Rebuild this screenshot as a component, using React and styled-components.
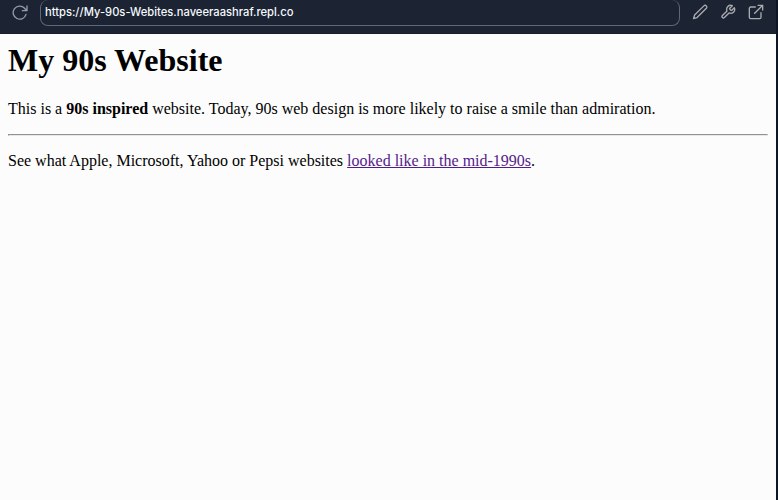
import React from 'react';
import styled, { createGlobalStyle } from 'styled-components';

const GlobalStyle = createGlobalStyle`
  * { box-sizing: border-box; }
  body { margin: 0; background: #fcfcfc; }
`;

const Window = styled.div`
  display: flex;
  flex-direction: column;
  width: 778px;
  height: 500px;
  overflow: hidden;
  background: #fcfcfc;
  border-right: 2px solid #0e1525;
`;

const Toolbar = styled.header`
  display: flex;
  align-items: flex-start;
  flex: none;
  height: 34px;
  padding-left: 12px;
  background: #1c2333;
  border-bottom: 1px solid #171d2d;
`;

const IconButton = styled.button`
  display: flex;
  flex: none;
  margin: 4px 12px 0 0;
  padding: 0;
  border: 0;
  background: none;
  color: ${(p) => p.$color || '#a9abaf'};
`;

const AddressBar = styled.div`
  flex: none;
  width: 640px;
  height: 26px;
  margin-right: 12px;
  padding: 3px 4px 0;
  border: 1px solid #5f677a;
  border-top: 0;
  border-radius: 8px;
  color: #f5f9fc;
  font: 500 11.2px/18px Inter, sans-serif;
  white-space: nowrap;
`;

const Page = styled.main`
  flex: 1;
  padding: 9px 8px;
  color: #000;
  font: 16px/18px "Liberation Serif", "Times New Roman", serif;
`;

const Title = styled.h1`
  margin: 0 0 22px;
  font-size: 32px;
  line-height: 35px;
`;

const Paragraph = styled.p`
  margin: 0;
  white-space: nowrap;
`;

const Rule = styled.hr`
  height: 2px;
  margin: 16px 0;
  border: 1px solid;
  border-color: #929292 #e8e8e8 #e8e8e8 #929292;
`;

const Link = styled.a`
  color: #551a8b;
  text-decoration: underline;
`;

const Icon = ({ children }) => (
  <svg width="16" height="16" viewBox="0 0 24 24" fill="none" stroke="currentColor" strokeWidth="2" strokeLinejoin="round" strokeLinecap="round" aria-hidden="true">
    {children}
  </svg>
);

const RefreshIcon = () => (
  <Icon>
    <path d="M22.5 3v7h-7M22 9.8 18.5 6A9.8 9.8 0 1 0 21 15.5" />
  </Icon>
);

const PencilIcon = () => (
  <Icon>
    <path d="M17.8 2.8a2.6 2.6 0 0 1 3.7 3.7L7.6 20.3l-5.3 1.6 1.6-5.3z" />
  </Icon>
);

const WrenchIcon = () => (
  <Icon>
    <path d="M14.7 6.3a1 1 0 0 0 0 1.4l1.6 1.6a1 1 0 0 0 1.4 0l3.77-3.77a6 6 0 0 1-7.94 7.94l-6.91 6.91a2.12 2.12 0 0 1-3-3l6.91-6.91a6 6 0 0 1 7.94-7.94z" />
  </Icon>
);

const ExternalIcon = () => (
  <Icon>
    <path d="M19.5 13v7a2 2 0 0 1-2 2H4a2 2 0 0 1-2-2V6.5a2 2 0 0 1 2-2h7M15 2h7v7M10 14 22 2" />
  </Icon>
);

export default function App() {
  return (
    <Window>
      <GlobalStyle />
      <Toolbar>
        <IconButton aria-label="Reload" $color="#969ba5"><RefreshIcon /></IconButton>
        <AddressBar>https://My-90s-Webites.naveeraashraf.repl.co</AddressBar>
        <IconButton aria-label="Edit"><PencilIcon /></IconButton>
        <IconButton aria-label="Developer tools"><WrenchIcon /></IconButton>
        <IconButton aria-label="Open in new tab"><ExternalIcon /></IconButton>
      </Toolbar>
      <Page>
        <Title>My 90s Website</Title>
        <Paragraph>
          This is a <b>90s inspired</b> website. Today, 90s web design is more likely to raise a smile than admiration.
        </Paragraph>
        <Rule />
        <Paragraph>
          See what Apple, Microsoft, Yahoo or Pepsi websites <Link href="#">looked like in the mid-1990s</Link>.
        </Paragraph>
      </Page>
    </Window>
  );
}
